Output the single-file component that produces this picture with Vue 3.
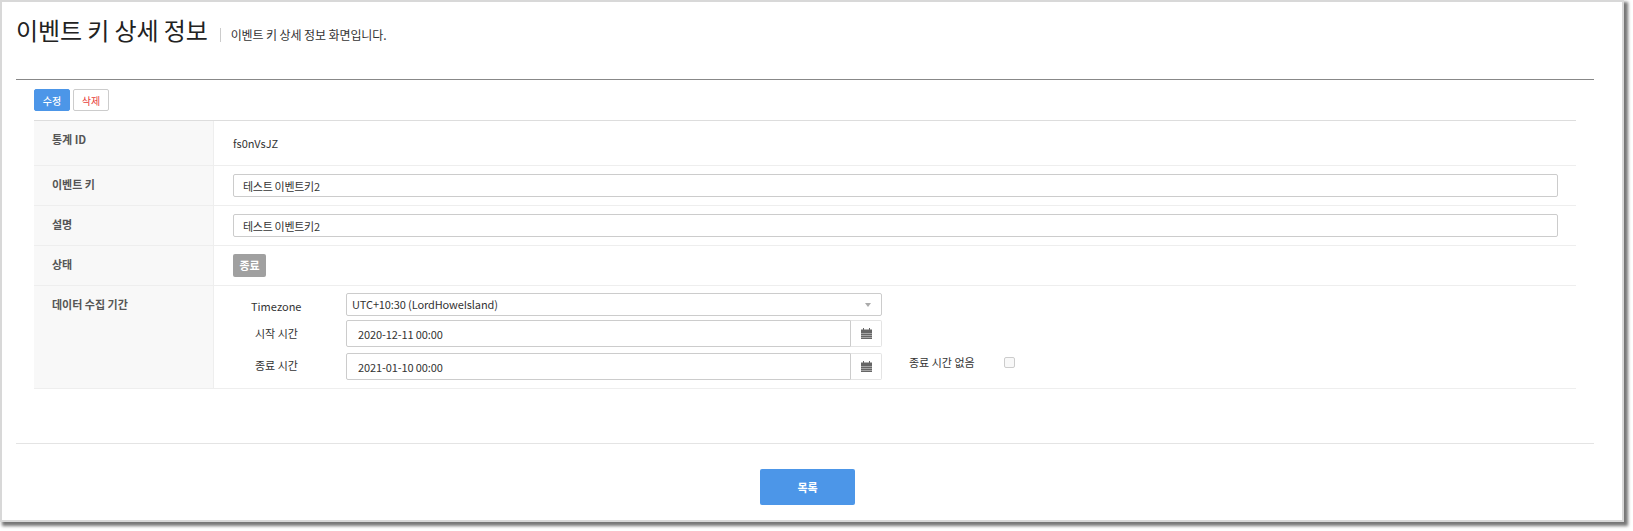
<script setup>
const basicRows = [
  { label: '이벤트 키', value: '테스트 이벤트키2' },
  { label: '설명', value: '테스트 이벤트키2' },
]
</script>

<template>
  <div class="panel">
    <header class="head">
      <h1 class="title">이벤트 키 상세 정보</h1>
      <p class="subtitle">이벤트 키 상세 정보 화면입니다.</p>
    </header>

    <section class="body">
      <div class="actions">
        <button class="btn primary" type="button">수정</button>
        <button class="btn danger" type="button">삭제</button>
      </div>

      <div class="table">
        <div class="row row-id">
          <div class="th">통계 ID</div>
          <div class="td id-value">fs0nVsJZ</div>
        </div>
        <div v-for="row in basicRows" :key="row.label" class="row row-input">
          <div class="th">{{ row.label }}</div>
          <div class="td"><input class="text" :value="row.value" /></div>
        </div>
        <div class="row row-input">
          <div class="th">상태</div>
          <div class="td"><span class="badge">종료</span></div>
        </div>
        <div class="row row-period">
          <div class="th">데이터 수집 기간</div>
          <div class="td period">
            <div class="period-line tz">
              <span class="period-label tz-label">Timezone</span>
              <div class="select">
                <span>UTC+10:30 (LordHoweIsland)</span>
                <i class="caret"></i>
              </div>
            </div>
            <div class="period-line start">
              <span class="period-label shift">시작 시간</span>
              <div class="date">
                <input class="date-input" value="2020-12-11 00:00" />
                <span class="addon">
                  <svg width="11" height="11" viewBox="0 0 11 11">
                    <path fill="#666" d="M0 1.5h2V0h1v1.5h5V0h1v1.5h2V11H0z" />
                    <path fill="#fff" opacity=".55" d="M0 5h11v.7H0zM0 7h11v.7H0zM0 9h11v.7H0z" />
                  </svg>
                </span>
              </div>
            </div>
            <div class="period-line end">
              <span class="period-label shift">종료 시간</span>
              <div class="date">
                <input class="date-input" value="2021-01-10 00:00" />
                <span class="addon">
                  <svg width="11" height="11" viewBox="0 0 11 11">
                    <path fill="#666" d="M0 1.5h2V0h1v1.5h5V0h1v1.5h2V11H0z" />
                    <path fill="#fff" opacity=".55" d="M0 5h11v.7H0zM0 7h11v.7H0zM0 9h11v.7H0z" />
                  </svg>
                </span>
              </div>
              <span class="no-end">종료 시간 없음</span>
              <span class="check"></span>
            </div>
          </div>
        </div>
      </div>
    </section>

    <footer class="foot">
      <button class="btn list" type="button">목록</button>
    </footer>
  </div>
</template>

<style>
html, body { margin: 0; background: #fff; min-height: 531px; }
</style>

<style scoped>
* { box-sizing: border-box; }
.panel {
  width: 1624px;
  height: 522px;
  border: 2px solid #d8d8d8;
  background: #fff;
  box-shadow: 3px 3px 3px 1px #777;
  padding: 0 28px 0 14px;
  font-family: "Noto Sans CJK KR", "Noto Sans", sans-serif;
  font-size: 11px;
  color: #333;
}
.head {
  height: 78px;
  border-bottom: 1px solid #888;
  display: flex;
  align-items: flex-start;
  padding-top: 13px;
}
.title {
  margin: 0;
  font-size: 24px;
  font-weight: 400;
  line-height: 30px;
  letter-spacing: -0.1px;
  color: #222;
}
.subtitle {
  margin: 13px 0 0 12px;
  padding-left: 10px;
  border-left: 1px solid #ccc;
  font-size: 12px;
  line-height: 14px;
  height: 14px;
  letter-spacing: -0.1px;
  color: #333;
}
.body { padding: 9px 18px 0 18px; }
.actions { display: flex; gap: 3px; height: 22px; margin-bottom: 9px; }
.btn {
  font-family: inherit;
  font-size: 10px;
  border-radius: 2px;
  padding: 0;
  height: 22px;
  width: 36px;
  line-height: 20px;
  cursor: pointer;
}
.primary { background: #4c96e8; border: 1px solid #4c96e8; color: #fff; padding-top: 1px; font-weight: 500; }
.danger { background: #fff; border: 1px solid #ccc; color: #e8403c; padding-top: 1px; }
.table { border-top: 1px solid #ddd; }
.row {
  display: grid;
  grid-template-columns: 180px 1fr;
  border-bottom: 1px solid #eee;
}
.row-id { height: 45px; }
.row-input { height: 40px; }
.row-period { height: 103px; }
.th {
  background: #f8f8f8;
  border-right: 1px solid #eee;
  padding: 10px 0 0 18px;
  font-size: 11px;
  font-weight: 700;
  line-height: 16px;
  color: #555;
}
.td { padding: 8px 18px 0 19px; }
.id-value { padding-top: 14px; line-height: 16px; font-size: 11px; }
.text {
  display: block;
  width: 100%;
  height: 23px;
  border: 1px solid #ccc;
  border-radius: 2px;
  padding: 0 9px;
  font-family: inherit;
  font-size: 11px;
  letter-spacing: -0.3px;
  color: #333;
  outline: none;
}
.badge {
  display: block;
  width: 33px;
  height: 23px;
  background: #a0a0a0;
  border-radius: 2px;
  color: #fff;
  font-size: 11px;
  font-weight: 700;
  line-height: 22px;
  text-align: center;
}
.period { padding-top: 7px; }
.period-line { display: flex; align-items: center; }
.tz { height: 23px; }
.start { height: 27px; margin-top: 4px; }
.end { height: 27px; margin-top: 6px; }
.period-label { width: 113px; flex: none; padding-left: 18px; }
.tz-label { padding-top: 3px; font-size: 11px; color: #333; }
.shift { padding-left: 22px; margin-top: -2px; font-size: 11px; }
.end .shift { margin-top: -3px; }
.select {
  width: 536px;
  height: 23px;
  border: 1px solid #ccc;
  border-radius: 2px;
  padding: 0 10px 2px 5px;
  display: flex;
  align-items: center;
  justify-content: space-between;
  font-size: 11px;
  letter-spacing: -0.12px;
}
.caret {
  width: 0;
  height: 0;
  margin-top: 2px;
  border-left: 3.5px solid transparent;
  border-right: 3.5px solid transparent;
  border-top: 4px solid #aaa;
}
.date { width: 536px; height: 27px; display: flex; }
.date-input {
  width: 505px;
  height: 27px;
  border: 1px solid #ccc;
  border-radius: 2px 0 0 2px;
  padding: 0 10px 0 11px;
  font-family: inherit;
  font-size: 11px;
  letter-spacing: -0.1px;
  color: #333;
  outline: none;
}
.addon {
  width: 31px;
  border: 1px solid #e4e4e4;
  border-left: 0;
  border-radius: 0 2px 2px 0;
  display: flex;
  align-items: center;
  justify-content: center;
}
.no-end { margin: -10px 0 0 27px; width: 95px; font-size: 11px; }
.check {
  width: 11px;
  height: 11px;
  border: 1px solid #ccc;
  border-radius: 2px;
  background: #f8f8f8;
  margin-top: -9px;
}
.foot {
  margin-top: 54px;
  border-top: 1px solid #e4e4e4;
  padding-top: 25px;
  display: flex;
  justify-content: center;
}
.list {
  width: 95px;
  height: 36px;
  background: #4c96e8;
  border: 0;
  color: #fff;
  font-weight: 700;
  font-size: 11px;
  margin-right: -5px;
  line-height: 36px;
}
</style>
